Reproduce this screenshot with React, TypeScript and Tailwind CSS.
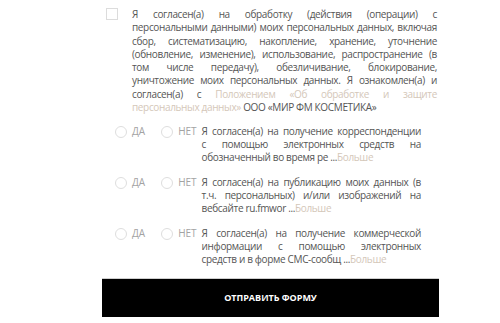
import React from 'react';

const font = { fontFamily: '"Open Sans", "Noto Sans", sans-serif' };

const Link = ({ children }: { children: React.ReactNode }) => (
  <span className="text-[#d4c7b9]">{children}</span>
);

// Lines are laid out as in the original form: every line but the last is stretched edge to edge.
function Justified({ lines, className = '' }: { lines: React.ReactNode[]; className?: string }) {
  return (
    <p className={`text-[10px] tracking-[-0.35px] text-[#555] ${className}`}>
      {lines.map((line, i) => (
        <span
          key={i}
          className={i < lines.length - 1 ? 'block text-justify [text-align-last:justify]' : 'block text-left'}
        >
          {line}
        </span>
      ))}
    </p>
  );
}

const agreement: React.ReactNode[] = [
  'Я согласен(а) на обработку (действия (операции) с',
  'персональными данными) моих персональных данных, включая',
  'сбор, систематизацию, накопление, хранение, уточнение',
  '(обновление, изменение), использование, распространение (в',
  'том числе передачу), обезличивание, блокирование,',
  'уничтожение моих персональных данных. Я ознакомлен(а) и',
  <>
    согласен(а) с <Link>Положением «Об обработке и защите</Link>
  </>,
  <>
    <Link>персональных данных»</Link> ООО «МИР ФМ КОСМЕТИКА»
  </>,
];

const consents: { id: string; lines: React.ReactNode[] }[] = [
  {
    id: 'mail',
    lines: [
      'Я согласен(а) на получение корреспонденции',
      'с помощью электронных средств на',
      <>
        обозначенный во время ре ...<Link>Больше</Link>
      </>,
    ],
  },
  {
    id: 'publish',
    lines: [
      'Я согласен(а) на публикацию моих данных (в',
      'т.ч. персональных) и/или изображений на',
      <>
        вебсайте ru.fmwor ...<Link>Больше</Link>
      </>,
    ],
  },
  {
    id: 'sms',
    lines: [
      'Я согласен(а) на получение коммерческой',
      'информации с помощью электронных',
      <>
        средств и в форме СМС-сообщ ...<Link>Больше</Link>
      </>,
    ],
  },
];

function Radio({ label }: { label: string }) {
  return (
    <label className="flex items-center gap-[5px] text-[10px] leading-[13px] text-[#a3a3a3]">
      <span className="block h-[12px] w-[12px] rounded-full border border-[#dedede] bg-white" />
      {label}
    </label>
  );
}

export default function App() {
  return (
    <div className="min-h-[323px] w-[500px] bg-white" style={font}>
      <div className="w-[439px] pl-[102px] pt-[8px]">
        <div className="flex items-start pr-[2px]">
          <span className="ml-[4px] mr-[14px] block h-[12px] w-[12px] shrink-0 border border-[#dcdcdc] bg-white" />
          <Justified lines={agreement} className="min-w-0 flex-1 leading-[13.25px]" />
        </div>

        <div className="mt-[11px] flex flex-col gap-[12px] pl-[13px] pr-[18px]">
          {consents.map((c) => (
            <div key={c.id} className="flex items-start">
              <div className="flex shrink-0 items-center gap-[16px] pr-[5px]">
                <Radio label="ДА" />
                <Radio label="НЕТ" />
              </div>
              <Justified lines={c.lines} className="min-w-0 flex-1 leading-[13px]" />
            </div>
          ))}
        </div>

        <button
          type="button"
          className="mt-[12px] flex h-[39px] w-full items-center justify-center border-t border-[#cfcfcf] bg-black text-[9px] font-bold uppercase text-white"
        >
          Отправить форму
        </button>
      </div>
    </div>
  );
}
